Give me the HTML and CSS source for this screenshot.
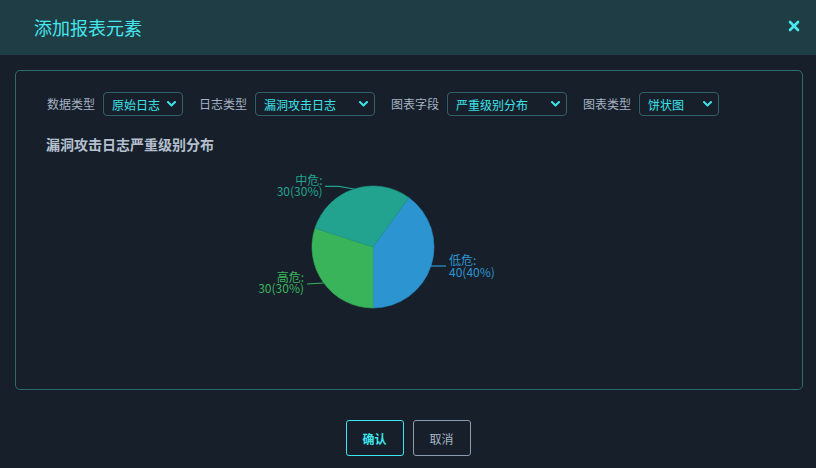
FILE: index.html
```html
<!DOCTYPE html>
<html lang="zh-CN">
<head>
<meta charset="utf-8">
<title>添加报表元素</title>
<link rel="stylesheet" href="styles.css">
</head>
<body>
<div class="dialog">
  <header class="dlg-head">
    <h1 class="dlg-title">添加报表元素</h1>
    <button class="close" aria-label="关闭">
      <svg width="12" height="12" viewBox="0 0 12 12"><path d="M2 2 L10 10 M10 2 L2 10" stroke="#4ae8ef" stroke-width="2.6" stroke-linecap="round" fill="none"/></svg>
    </button>
  </header>
  <main class="dlg-body">
    <section class="panel">
      <div class="filters">
        <div class="field">
          <span class="field-label">数据类型</span>
          <div class="select w80"><span>原始日志</span><svg class="chev" width="9" height="6" viewBox="0 0 9 6"><path d="M1 1 L4.5 4.5 L8 1" stroke="#3ee3ea" stroke-width="2" fill="none" stroke-linecap="round" stroke-linejoin="round"/></svg></div>
        </div>
        <div class="field">
          <span class="field-label">日志类型</span>
          <div class="select w120"><span>漏洞攻击日志</span><svg class="chev" width="9" height="6" viewBox="0 0 9 6"><path d="M1 1 L4.5 4.5 L8 1" stroke="#3ee3ea" stroke-width="2" fill="none" stroke-linecap="round" stroke-linejoin="round"/></svg></div>
        </div>
        <div class="field">
          <span class="field-label">图表字段</span>
          <div class="select w120"><span>严重级别分布</span><svg class="chev" width="9" height="6" viewBox="0 0 9 6"><path d="M1 1 L4.5 4.5 L8 1" stroke="#3ee3ea" stroke-width="2" fill="none" stroke-linecap="round" stroke-linejoin="round"/></svg></div>
        </div>
        <div class="field">
          <span class="field-label">图表类型</span>
          <div class="select w80"><span>饼状图</span><svg class="chev" width="9" height="6" viewBox="0 0 9 6"><path d="M1 1 L4.5 4.5 L8 1" stroke="#3ee3ea" stroke-width="2" fill="none" stroke-linecap="round" stroke-linejoin="round"/></svg></div>
        </div>
      </div>
      <h2 class="chart-title">漏洞攻击日志严重级别分布</h2>
      <svg class="chart" viewBox="16 154 786 235" width="786" height="235">
        <g class="slices">
          <path d="M373 247 L408.86 197.65 A61 61 0 0 1 373 308 Z" fill="#2c95d1" stroke="#2a8fc8" stroke-width="0.6"/>
          <path d="M373 247 L373 308 A61 61 0 0 1 314.98 228.15 Z" fill="#39b45b" stroke="#35aa56" stroke-width="0.6"/>
          <path d="M373 247 L314.98 228.15 A61 61 0 0 1 408.86 197.65 Z" fill="#22a38f" stroke="#209a87" stroke-width="0.6"/>
        </g>
        <g class="label-lines" fill="none" stroke-width="1.2">
          <polyline points="431,266 446,266" stroke="#2c95d1"/>
          <polyline points="354,189 339,186.3 325,186.3" stroke="#22a38f"/>
          <polyline points="323.5,283 307,284" stroke="#39b45b"/>
        </g>
        <g class="labels">
          <text fill="#2f95d0"><tspan x="449" y="264.5">低危:</tspan><tspan x="449" y="276.5">40(40%)</tspan></text>
          <text fill="#23a38f" text-anchor="end"><tspan x="322.5" y="184.5">中危:</tspan><tspan x="322.5" y="196">30(30%)</tspan></text>
          <text fill="#3ab55c" text-anchor="end"><tspan x="304" y="281.5">高危:</tspan><tspan x="304" y="293">30(30%)</tspan></text>
        </g>
      </svg>
    </section>
  </main>
  <footer class="dlg-foot">
    <button class="btn btn-primary">确认</button>
    <button class="btn">取消</button>
  </footer>
</div>
</body>
</html>
```

FILE: styles.css
```css
html, body {
  margin: 0;
  padding: 0;
}
body {
  width: 816px;
  height: 468px;
  overflow: hidden;
  background: #161f2a;
  font-family: "Noto Sans CJK SC", "Noto Sans", sans-serif;
}
.dialog {
  width: 816px;
  height: 468px;
}
.dlg-head {
  height: 55px;
  box-sizing: border-box;
  background: #1f3d44;
  display: flex;
  align-items: center;
  justify-content: space-between;
  padding: 0 16px 0 34px;
}
.dlg-title {
  margin: 0;
  font-size: 18px;
  font-weight: normal;
  line-height: 1;
  color: #47e6ee;
  position: relative;
  top: -1px;
}
.close {
  border: 0;
  background: transparent;
  padding: 0;
  width: 12px;
  height: 12px;
  display: flex;
  position: relative;
  top: -2px;
}
.dlg-body {
  padding: 15px 13px 0 15px;
}
.panel {
  height: 320px;
  box-sizing: border-box;
  border: 1px solid #2c6b6f;
  border-radius: 5px;
}
.filters {
  display: flex;
  align-items: center;
  padding: 21px 0 0 31px;
}
.field {
  display: flex;
  align-items: center;
  margin-right: 16px;
}
.field-label {
  font-size: 12px;
  line-height: 16px;
  color: #a5b2c3;
  margin-right: 8px;
}
.select {
  height: 24px;
  box-sizing: border-box;
  border: 1px solid #2e6266;
  border-radius: 4px;
  display: flex;
  align-items: center;
  justify-content: space-between;
  padding: 0 6px 0 8px;
  font-size: 12px;
  color: #3ee3ea;
}
.w80 { width: 80px; }
.w120 { width: 120px; }
.chev {
  display: block;
}
.chart-title {
  margin: 18px 0 0 30px;
  font-size: 14px;
  line-height: 20px;
  font-weight: bold;
  color: #b5c0cf;
}
.chart {
  display: block;
}
.labels text {
  font-size: 12px;
  font-family: "Noto Sans CJK SC", "Noto Sans", sans-serif;
}
.dlg-foot {
  display: flex;
  justify-content: center;
  gap: 9px;
  padding-top: 30px;
}
.btn {
  width: 58px;
  height: 36px;
  box-sizing: border-box;
  background: transparent;
  border: 1px solid #8b9aae;
  border-radius: 3px;
  color: #aab6c6;
  font-size: 12px;
  font-family: inherit;
  padding: 0;
}
.btn-primary {
  border-color: #3ee6ee;
  color: #3ee6ee;
  font-weight: bold;
}
```
